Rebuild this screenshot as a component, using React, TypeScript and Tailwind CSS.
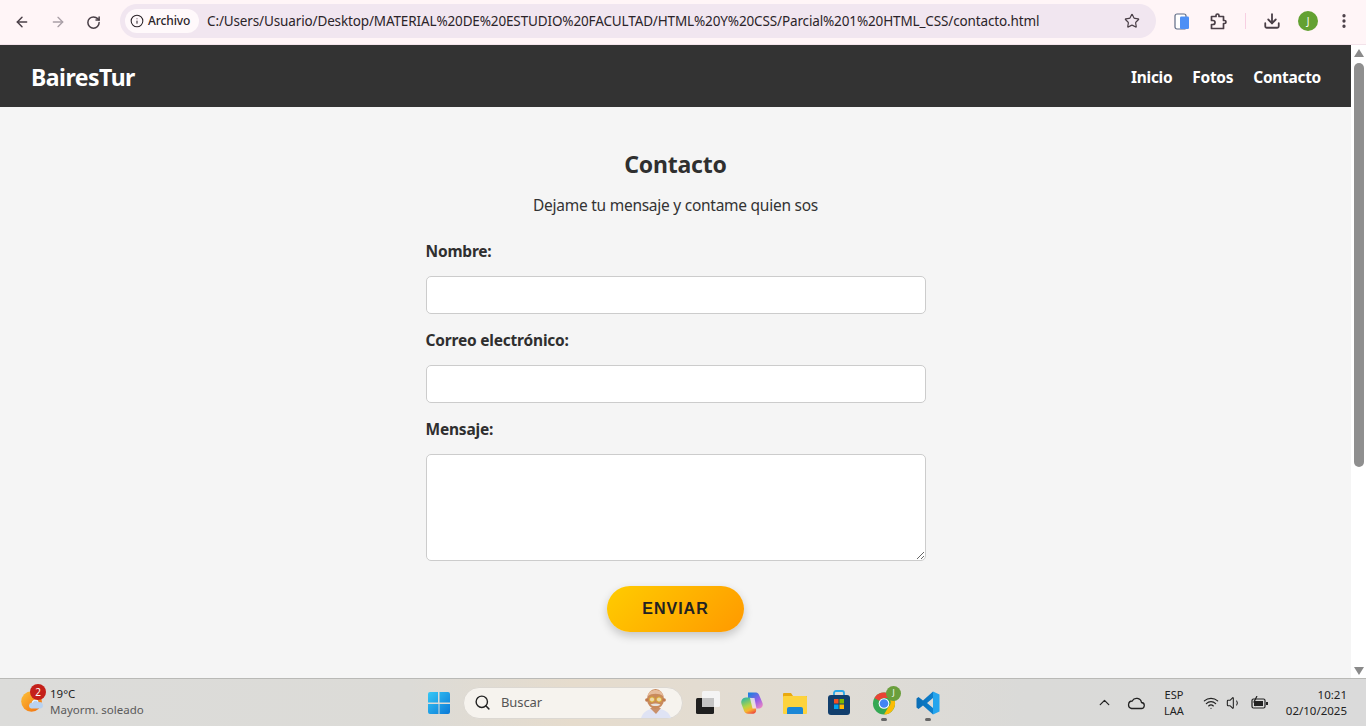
import { ArrowLeft, ArrowRight, RotateCw, Info, Star, Download, EllipsisVertical, Search, ChevronUp, Wifi, Volume1 } from "lucide-react"

const segoe = "font-['Noto_Sans',sans-serif]"

function Toolbar() {
	return (
		<div className="h-[45px] shrink-0 bg-[#fff5f7] border-b border-[#f3e3ea] flex items-center text-[#4a3f47]">
			<div className="w-[120px] shrink-0 flex items-center pl-[14px] gap-[20px]">
				<ArrowLeft size={16} strokeWidth={2.2} />
				<ArrowRight size={16} strokeWidth={2} className="text-[#a99fa6]" />
				<RotateCw size={15} strokeWidth={2.4} />
			</div>
			<div className="w-[1036px] h-[34px] ml-0 rounded-full bg-[#f1e6f0] flex items-center pl-[5px] pr-[16px] -mt-[2px]">
				<div className="h-[24px] w-[74px] rounded-full bg-[#fff9fb] flex items-center pl-[5px] gap-[4px] text-[#2b2429]">
					<Info size={14} strokeWidth={1.8} className="shrink-0" />
					<span className={`${segoe} text-[12px] leading-none font-medium tracking-[-0.1px]`}>Archivo</span>
				</div>
				<span className={`${segoe} ml-[8px] text-[13.5px] text-[#2b2429] whitespace-nowrap tracking-[-0.134px]`}>
					C:/Users/Usuario/Desktop/MATERIAL%20DE%20ESTUDIO%20FACULTAD/HTML%20Y%20CSS/Parcial%201%20HTML_CSS/contacto.html
				</span>
				<Star size={16} strokeWidth={1.8} className="ml-auto" />
			</div>
			<div className="flex-1 flex items-center pl-[18px] -mt-[2px]">
				<svg width="16" height="17" viewBox="0 0 16 17" className="shrink-0">
					<rect x="1" y="1" width="11" height="15" rx="2" fill="#fff" stroke="#5f6b85" strokeWidth="1.200" />
					<rect x="6" y="3.500" width="9" height="12.500" rx="1.200" fill="#4e8ff5" />
				</svg>
				{/* extensions */}
				<svg width="17" height="17" viewBox="0 0 17 17" className="ml-[20px] shrink-0">
					<path
						d="M1.500 3.500H6V2.500a1.500 1.500 0 0 1 3 0v1h4.500V7.500h1a1.500 1.500 0 0 1 0 3h-1v5H1.500v-4H3a2 2 0 0 0 0-4H1.500z"
						fill="none"
						stroke="#4a3f47"
						strokeWidth="1.700"
						strokeLinejoin="round"
					/>
				</svg>
				<div className="w-[1px] h-[16px] bg-[#f7cfe2] ml-[18px]" />
				<Download size={18} strokeWidth={2.4} className="ml-[17px]" />
				<div className={`${segoe} w-[20px] h-[20px] rounded-full bg-[#63a132] text-white text-[10px] flex items-center justify-center ml-[17px]`}>J</div>
				<EllipsisVertical size={18} strokeWidth={2.4} className="ml-[17px]" />
			</div>
		</div>
	)
}

function Field({ label, children }: { label: string; children: React.ReactNode }) {
	return (
		<div>
			<label className="block text-[15.5px] leading-[22px] font-bold text-[#2f2f2f] tracking-[-0.2px]">{label}</label>
			{children}
		</div>
	)
}

function Page() {
	return (
		<div className={`${segoe} flex-1 min-w-0 flex flex-col bg-[#f5f5f5]`}>
			<header className="h-[62px] bg-[#333333] flex items-center justify-between pl-[31px] pr-[30px] pt-[2px] text-white">
				<div className="text-[23px] font-bold tracking-[-0.5px]">BairesTur</div>
				<nav className="flex gap-[20px] pt-[1px] text-[15.5px] font-bold tracking-[-0.3px]">
					<a>Inicio</a>
					<a>Fotos</a>
					<a>Contacto</a>
				</nav>
			</header>
			<main className="w-[500px] mx-auto flex-1 pt-[41px]">
				<h2 className="text-center text-[23px] leading-[32px] font-bold text-[#2f2f2f] tracking-[-0.2px]">Contacto</h2>
				<p className="text-center text-[15.5px] leading-[22px] text-[#333333] mt-[14px] tracking-[-0.26px]">Dejame tu mensaje y contame quien sos</p>
				<form className="mt-[24px]">
					<Field label="Nombre:">
						<input className="block mt-[14px] mb-[15px] w-full h-[38px] bg-white border border-[#cccccc] rounded-[5px]" />
					</Field>
					<Field label="Correo electrónico:">
						<input className="block mt-[14px] mb-[15px] w-full h-[38px] bg-white border border-[#cccccc] rounded-[5px]" />
					</Field>
					<Field label="Mensaje:">
						<textarea className="block mt-[14px] w-full h-[107px] bg-white border border-[#cccccc] rounded-[5px] resize-y" />
					</Field>
					<div className="flex justify-center mt-[25px]">
						<button
							type="button"
							className="w-[137px] h-[46px] rounded-full bg-[linear-gradient(135deg,#ffcc00,#ff9900)] shadow-[0_4px_10px_rgba(0,0,0,0.2)] font-['Liberation_Sans',sans-serif] font-bold text-[16px] tracking-[1px] text-[#222222]">
							ENVIAR
						</button>
					</div>
				</form>
			</main>
		</div>
	)
}

function Scrollbar() {
	return (
		<div className="w-[15px] shrink-0 bg-[#ffffff] flex flex-col items-center">
			<div className="w-0 h-0 mt-[4px] border-x-[5px] border-x-transparent border-b-[8px] border-b-[#8a8a8a]" />
			<div className="w-[10px] h-[404px] mt-[6px] rounded-full bg-[#8f8f8f]" />
			<div className="w-0 h-0 mt-auto mb-[3px] border-x-[5px] border-x-transparent border-t-[8px] border-t-[#8a8a8a]" />
		</div>
	)
}

function Taskbar() {
	return (
		<div className={`${segoe} h-[48px] shrink-0 border-t border-[#b9b9b6] bg-[linear-gradient(90deg,#dcdcda_0%,#dcdbd7_30%,#e6dccd_42%,#e0dcd5_60%,#dadad8_75%,#dadada_100%)] flex items-center relative text-[#222]`}>
			<div className="w-[425px] shrink-0 flex items-center pl-[21px] -mt-[2px]">
				<div className="relative w-[22px] h-[21px]">
					<svg width="22" height="21" viewBox="0 0 22 21">
						<defs>
							<linearGradient id="sun" x1="0" y1="0" x2="1" y2="1">
								<stop offset="0" stopColor="#fcc23a" />
								<stop offset="1" stopColor="#f26d0c" />
							</linearGradient>
						</defs>
						<circle cx="10.500" cy="10.500" r="10.300" fill="url(#sun)" />
						<path d="M10 17.500a3 3 0 0 1 .5-5.800 4 4 0 0 1 7.500-.5 3.200 3.200 0 0 1 1.500 6.300z" fill="#b9d2f0" />
						<path d="M11.500 11.500a3 3 0 0 1 5.500-1 3 3 0 0 0-5.500 1z" fill="#eef5fd" stroke="#eef5fd" />
					</svg>
					<div className="absolute left-[9px] top-[-7px] w-[16px] h-[16px] rounded-full bg-[#c4201a] text-white text-[10px] flex items-center justify-center">2</div>
				</div>
				<div className="ml-[7px] leading-none">
					<div className="text-[11.5px] leading-[16px]">19°C</div>
					<div className="text-[11.5px] leading-[16px] text-[#5a5a5a]">Mayorm. soleado</div>
				</div>
			</div>
			<div className="w-[660px] shrink-0 flex items-center">
				{/* windows */}
				<svg width="24" height="24" viewBox="0 0 24 24" className="ml-[2px]">
					<defs>
						<linearGradient id="win" x1="0" y1="0" x2="1" y2="1">
							<stop offset="0" stopColor="#36c8f6" />
							<stop offset="1" stopColor="#0a78d6" />
						</linearGradient>
					</defs>
					<path d="M1 3a2 2 0 0 1 2-2h8v10.500H1zM12.500 1H21a2 2 0 0 1 2 2v8.500H12.500zM1 13h10.500v10H3a2 2 0 0 1-2-2zM12.500 13H23v8a2 2 0 0 1-2 2h-8.500z" fill="url(#win)" />
				</svg>
				<div className="ml-[12px] w-[220px] h-[32px] rounded-full bg-[#f6f3ee] border border-[#dcd8d2] flex items-center pl-[10px] relative">
					<Search size={17} strokeWidth={2} className="text-[#222]" />
					<span className="ml-[10px] text-[13px] text-[#555] tracking-[-0.1px]">Buscar</span>
					{/* bing figure */}
					<svg width="32" height="30" viewBox="0 0 32 30" className="absolute right-[10px] bottom-0">
						<path d="M1 30c2-6 6-8 10-9h9c5 1 9 3 11 9z" fill="#dfe3f4" />
						<path d="M10 20h11l-5 6z" fill="#c9906a" />
						<ellipse cx="15.500" cy="11" rx="8.500" ry="10" fill="#c98a5c" />
						<path d="M8 8c0-8 15-8 15 0-4-3-11-3-15 0z" fill="#e6bc9c" />
						<circle cx="6.800" cy="12" r="1.700" fill="#c07a4d" />
						<circle cx="24.200" cy="12" r="1.700" fill="#c07a4d" />
						<circle cx="12" cy="11.500" r="2.600" fill="#ecd9a8" stroke="#d9a72e" strokeWidth="1" />
						<circle cx="19" cy="11.500" r="2.600" fill="#ecd9a8" stroke="#d9a72e" strokeWidth="1" />
						<path d="M10.500 16.500c3-1.500 7-1.500 10 0-2 2-8 2-10 0z" fill="#e8e3de" />
					</svg>
				</div>
				{/* task view */}
				<svg width="26" height="24" viewBox="0 0 26 24" className="ml-[12px]">
					<rect x="7" y="0" width="18" height="16" rx="1.500" fill="#f4f4f4" />
					<rect x="1" y="7" width="18" height="16" rx="1.500" fill="#1f1f1f" />
					<rect x="7" y="7" width="12" height="9" fill="#c4c4c4" />
				</svg>
				{/* copilot */}
				<svg width="24" height="24" viewBox="0 0 24 24" className="ml-[19px]">
					<defs>
						<linearGradient id="cpa" x1="0.200" y1="0" x2="0.900" y2="1">
							<stop offset="0" stopColor="#1f7fe0" />
							<stop offset="0.550" stopColor="#9a5fe6" />
							<stop offset="1" stopColor="#f28ac0" />
						</linearGradient>
						<linearGradient id="cpb" x1="0.300" y1="0" x2="0.700" y2="1">
							<stop offset="0" stopColor="#35b8a0" />
							<stop offset="0.500" stopColor="#b7d443" />
							<stop offset="0.750" stopColor="#f8b530" />
							<stop offset="1" stopColor="#ee4f3d" />
						</linearGradient>
					</defs>
					<path d="M8 1.500h8c1.500 0 2.500 1 3 2.300l3.500 8.200c1 3-1 5.500-3.500 5.500h-4.500L8 8z" fill="url(#cpa)" />
					<path d="M6 6.500h4c1.500 0 2.500 1 3 2.300l3 9c.7 3-1 5-3.500 5H8c-2 0-3-1-3.800-2.500L1.500 13C.5 9.500 2.500 6.500 6 6.500z" fill="url(#cpb)" />
					<path d="M10 7h4.500l2 10.500H12.500z" fill="#f1e2f2" opacity="0.850" />
				</svg>
				{/* explorer */}
				<svg width="24" height="24" viewBox="0 0 24 24" className="ml-[19px]">
					<path d="M0 3a1 1 0 0 1 1-1h7l2 3h14v3H0z" fill="#e9a90f" />
					<rect x="0" y="5" width="24" height="18" rx="1" fill="#fdd33d" />
					<path d="M4 23v-5a2 2 0 0 1 2-2h12a2 2 0 0 1 2 2v5z" fill="#1b87d6" />
				</svg>
				{/* store */}
				<svg width="24" height="26" viewBox="0 0 24 26" className="ml-[20px]">
					<path d="M7 5V3a2 2 0 0 1 2-2h6a2 2 0 0 1 2 2v2" fill="none" stroke="#28a8ea" strokeWidth="1.800" />
					<rect x="1" y="5" width="22" height="20" rx="3" fill="#123f6d" />
					<rect x="7" y="9" width="4.500" height="4.500" fill="#f25022" />
					<rect x="12.500" y="9" width="4.500" height="4.500" fill="#7fba00" />
					<rect x="7" y="14.500" width="4.500" height="4.500" fill="#00a4ef" />
					<rect x="12.500" y="14.500" width="4.500" height="4.500" fill="#ffb900" />
				</svg>
				{/* chrome */}
				<div className="relative ml-[21px] w-[24px] h-[24px] flex flex-col items-center">
					<svg width="24" height="24" viewBox="0 0 24 24" className="mt-[1px]">
						<circle cx="12" cy="12" r="11.500" fill="#34a853" />
						<path d="M2.040 6.250A11.500 11.500 0 0 1 21.960 6.250H12a5.750 5.750 0 0 0-5 2.900z" fill="#ea4335" />
						<path d="M21.960 6.250A11.500 11.500 0 0 1 12 23.500l5-8.600a5.750 5.750 0 0 0 0-8.650z" fill="#fbbc04" />
						<circle cx="12" cy="12" r="5.600" fill="#fff" />
						<circle cx="12" cy="12" r="4.500" fill="#4285f4" />
					</svg>
					<div className="absolute -right-[5px] -top-[5px] w-[15px] h-[15px] rounded-full bg-[#6a9f3c] text-white text-[8px] flex items-center justify-center">J</div>
					<div className="absolute -bottom-[6px] w-[6px] h-[3px] rounded-full bg-[#666]" />
				</div>
				{/* vscode */}
				<div className="relative ml-[20px] w-[24px] h-[24px]">
					<svg width="24" height="24" viewBox="0 0 24 24">
						<defs>
							<linearGradient id="vsc" x1="0" y1="0" x2="1" y2="0">
								<stop offset="0" stopColor="#0a6db5" />
								<stop offset="0.700" stopColor="#0e7fcc" />
								<stop offset="0.720" stopColor="#25a5ee" />
								<stop offset="1" stopColor="#25a5ee" />
							</linearGradient>
						</defs>
						<path d="M17 .5l6.500 3v17l-6.500 3L7 14.500 2.500 18 .5 16.500V7.500L2.500 6 7 9.500zM17 7l-6 5 6 5z" fill="url(#vsc)" fillRule="evenodd" />
					</svg>
					<div className="absolute -bottom-[6px] left-[9px] w-[6px] h-[3px] rounded-full bg-[#666]" />
				</div>
			</div>
			<div className="flex-1 flex items-center text-[#222]">
				<ChevronUp size={17} strokeWidth={1.8} className="ml-[11px]" />
				{/* onedrive */}
				<svg width="18" height="14" viewBox="0 0 18 14" className="ml-[14px]">
					<path d="M4.500 12.500h9.500a3 3 0 0 0 .5-6A5 5 0 0 0 5.200 5 3.800 3.800 0 0 0 4.500 12.500z" fill="none" stroke="#222" strokeWidth="1.300" />
				</svg>
				<div className="ml-[18px] w-[22px] text-[11px] leading-[16px] text-center">
					<div>ESP</div>
					<div>LAA</div>
				</div>
				<Wifi size={16} strokeWidth={1.8} className="ml-[18px]" />
				<Volume1 size={16} strokeWidth={1.6} className="ml-[7px]" />
				{/* battery */}
				<svg width="18" height="14" viewBox="0 0 18 14" className="ml-[9px]">
					<rect x="1" y="3" width="13" height="9" rx="1.500" fill="none" stroke="#222" strokeWidth="1.200" />
					<rect x="3" y="5" width="9" height="5" fill="#222" />
					<rect x="15" y="6" width="2" height="3" fill="#222" />
					<path d="M6 0L3 6h2.500L4 10" fill="none" stroke="#222" strokeWidth="1.200" />
				</svg>
				<div className="ml-auto pr-[19px] text-[11.500px] leading-[16px] text-right">
					<div>10:21</div>
					<div>02/10/2025</div>
				</div>
			</div>
		</div>
	)
}

function App() {
	return (
		<div className="w-[1366px] h-[726px] overflow-hidden flex flex-col">
			<Toolbar />
			<div className="flex-1 min-h-0 flex">
				<Page />
				<Scrollbar />
			</div>
			<Taskbar />
		</div>
	)
}

export default App
